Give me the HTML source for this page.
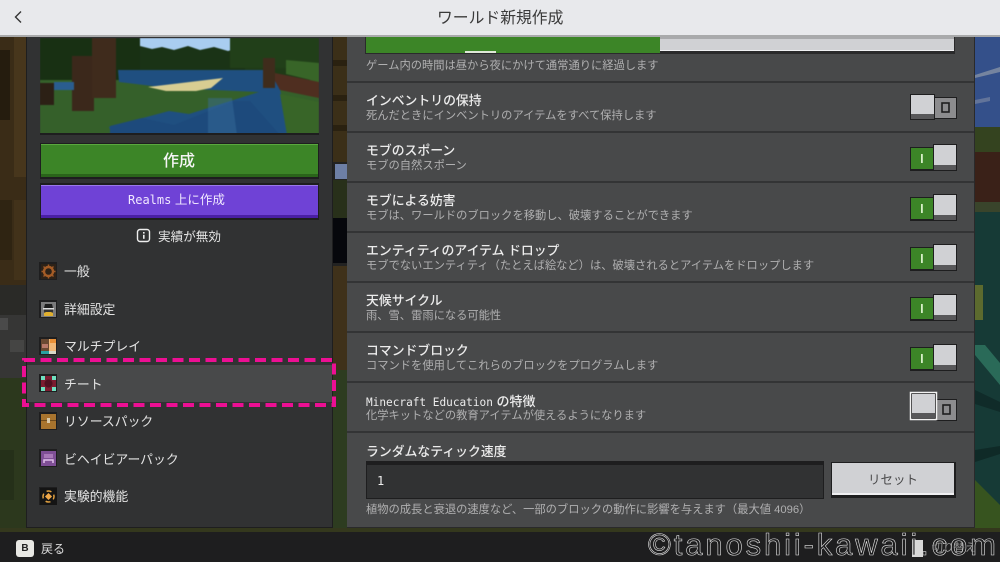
<!DOCTYPE html>
<html lang="ja"><head><meta charset="utf-8"><style>
*{box-sizing:border-box}
html,body{margin:0;padding:0}
body{width:1000px;height:562px;overflow:hidden;position:relative;background:#222;font-family:"Liberation Sans","Noto Sans CJK JP",sans-serif;color:#fff}
.a{position:absolute}
.t{position:absolute;white-space:nowrap;line-height:1}
.tt{left:366px;font-size:12.85px;color:#ececec;font-weight:500}
.sb{left:366px;font-size:11.27px;color:#b0b0b1}
.nav{left:64px;font-size:12.85px;color:#e2e2e2}
.ic{position:absolute;left:39px;width:18px;height:18px;background:#1e1e1f}
.ic svg{display:block;margin:.5px}
.m{font-family:"DejaVu Sans Mono",monospace}
</style></head><body>
<svg class="a" style="left:0;top:0" width="1000" height="562">
<rect x="0" y="37" width="26" height="250" fill="#3a2c17"/>
<rect x="14" y="37" width="12" height="140" fill="#47361c"/>
<rect x="0" y="50" width="10" height="70" fill="#251c0e"/>
<rect x="14" y="200" width="12" height="80" fill="#42321a"/>
<rect x="0" y="200" width="12" height="60" fill="#2f2412"/>
<rect x="0" y="310" width="26" height="70" fill="#363635"/>
<rect x="0" y="318" width="8" height="12" fill="#4a4a4a"/>
<rect x="10" y="340" width="14" height="12" fill="#454544"/>
<rect x="0" y="285" width="26" height="30" fill="#2a2a27"/>
<rect x="0" y="378" width="26" height="155" fill="#2c381d"/>
<rect x="0" y="450" width="14" height="50" fill="#253019"/>
<rect x="333" y="37" width="14" height="125" fill="#3b2f18"/>
<rect x="333" y="60" width="14" height="6" fill="#2a2110"/>
<rect x="333" y="95" width="14" height="6" fill="#2a2110"/>
<rect x="333" y="125" width="14" height="6" fill="#2a2110"/>
<rect x="335" y="164" width="13" height="15" fill="#6d7fa6"/>
<rect x="333" y="180" width="14" height="38" fill="#28301a"/>
<rect x="333" y="218" width="14" height="45" fill="#06070c"/>
<rect x="333" y="266" width="14" height="120" fill="#3f311a"/>
<rect x="333" y="370" width="14" height="165" fill="#2d3c20"/>
<rect x="975" y="37" width="25" height="90" fill="#34508a"/>
<path d="M975 75l25-8v5l-25 6z" fill="#75849f"/>
<path d="M975 100l15-3v4l-15 3z" fill="#62749a"/>
<rect x="975" y="127" width="25" height="25" fill="#34431f"/>
<rect x="975" y="152" width="25" height="50" fill="#3a2118"/>
<rect x="975" y="202" width="25" height="10" fill="#39442b"/>
<rect x="975" y="212" width="25" height="320" fill="#163a36"/>
<rect x="975" y="285" width="8" height="35" fill="#5c6a2e"/>
<path d="M975 345h10l15 18v22l-25-30z" fill="#2a6a58"/>
<path d="M975 390l25 12v10l-25-8z" fill="#102b29"/>
<path d="M975 450l25-4v8l-25 8z" fill="#0f2a27"/>
<path d="M975 480l25 25v27h-25z" fill="#37541f"/>
<rect x="0" y="528" width="1000" height="5" fill="#34381d"/>
</svg>

<!-- top bar -->
<div class="a" style="left:0;top:0;width:1000px;height:35px;background:#e8e9ec"></div>
<div class="a" style="left:0;top:35px;width:1000px;height:2px;background:#a9aaab"></div>
<svg class="a" style="left:12px;top:10px" width="12" height="14"><path d="M9 1.500L3.500 7l5.500 5.500" fill="none" stroke="#333" stroke-width="1.400"/></svg>
<div class="t" style="left:437px;top:10.500px;font-size:15.800px;color:#3a3a3a">ワールド新規作成</div>

<!-- left panel -->
<div class="a" style="left:26px;top:37px;width:307px;height:491px;background:#313233;border:1px solid #1e1e1f;border-top:0"></div>
<svg class="a" style="left:40px;top:38px" width="279" height="97" viewBox="0 0 279 97">
<g style="filter:blur(.5px)">
<rect width="279" height="97" fill="#1f3a17"/>
<rect x="100" width="105" height="13" fill="#a9cdf0"/>
<path d="M100 8l12 3 10-2 12 3 14-4 12 4 14-3 14 4 17-5v25H100z" fill="#1a3316"/>
<rect x="0" y="0" width="100" height="45" fill="#183013"/>
<rect x="190" y="0" width="89" height="30" fill="#213f19"/>
<path d="M0 42h279v55H0z" fill="#35602a"/>
<path d="M78 32h150l10 10 12 55H72l-3-8 60-16 20 3 70-22-90-4-50-6z" fill="#1f4f80"/>
<path d="M108 49l75-9-12 10-15 3-30 0z" fill="#d8cd92"/>
<path d="M70 97l0-9 32-8 32 7 60-24h16l30 34z" fill="#1d4a7c"/>
<path d="M168 60h24l5 37h-29z" fill="#3a6f9c" opacity=".45"/>
<path d="M230 34l49 10v16l-39-8z" fill="#4f2e20"/>
<path d="M240 56l39 8v33h-32z" fill="#386528"/>
<path d="M246 22l33 3v19l-33-8z" fill="#386528"/>
<rect x="223" y="20" width="12" height="30" fill="#3f2c1c"/>
<rect x="32" y="18" width="22" height="55" fill="#3b281b"/>
<rect x="52" y="0" width="24" height="60" fill="#3f2b1c"/>
<rect x="0" y="45" width="14" height="22" fill="#2c2015"/>
<rect x="14" y="44" width="20" height="8" fill="#2a5d8f"/>
</g>
<rect x="0" y="95" width="279" height="2" fill="#1e1e1f"/>
</svg>

<div class="a" style="left:40px;top:143px;width:279px;height:36px;background:#1e1e1f"></div>
<div class="a" style="left:41px;top:144px;width:277px;height:33px;background:#3c8527;border-top:1px solid #5aa83f;border-bottom:3px solid #2a641a"></div>
<div class="t" style="left:163px;top:153.500px;font-size:16px;color:#f4f4f4;font-weight:500">作成</div>
<div class="a" style="left:40px;top:183px;width:279px;height:37px;background:#1e1e1f"></div>
<div class="a" style="left:41px;top:185px;width:277px;height:33px;background:#6f42d6;border-top:1px solid #9a78ea;border-bottom:3px solid #4a1fa5"></div>
<div class="t" style="left:128px;top:194px;font-size:12.500px;color:#f0e8ff"><span class="m" style="font-size:12px">Realms</span> 上に作成</div>

<svg class="a" style="left:136px;top:228px" width="16" height="16"><rect x="1.500" y="1.500" width="12" height="12" rx="2.500" fill="none" stroke="#eee" stroke-width="1.400"/><rect x="7" y="4" width="1.600" height="1.600" fill="#eee"/><rect x="7" y="6.800" width="1.600" height="4" fill="#eee"/></svg>
<div class="t" style="left:158px;top:231px;font-size:12.600px;color:#e4e4e4">実績が無効</div>

<!-- nav items -->
<div class="ic" style="top:262px"><svg width="17" height="17"><rect x="1" y="1" width="15" height="15" fill="#2d2218"/><circle cx="8.500" cy="8.500" r="4.500" fill="none" stroke="#a55c26" stroke-width="2.400"/><path d="M8.500 1.500v2M8.500 13.500v2M1.500 8.500h2M13.500 8.500h2M3.500 3.500l1.500 1.500M12 12l1.500 1.500M13.500 3.500L12 5M5 12l-1.500 1.500" stroke="#a05a28" stroke-width="1.400"/></svg></div>
<div class="t nav" style="top:266px">一般</div>
<div class="ic" style="top:300px"><svg width="17" height="17"><rect x="1" y="1" width="15" height="15" fill="#7b7b7c"/><path d="M5 3h7l1 4H4z" fill="#1c1c1c"/><rect x="3" y="7" width="11" height="1.500" fill="#ddd"/><rect x="4" y="8.500" width="9" height="3" fill="#333"/><path d="M4 15v-3l2-1h5l2 1v3z" fill="#e0b030"/></svg></div>
<div class="t nav" style="top:304px">詳細設定</div>
<div class="ic" style="top:337px"><svg width="17" height="17"><rect x="1" y="1" width="8" height="15" fill="#6a4a32"/><rect x="9" y="1" width="7" height="15" fill="#f0b878"/><rect x="2" y="6" width="6" height="4" fill="#b87a6a"/><rect x="10" y="1" width="6" height="4" fill="#e89038"/><rect x="1" y="13" width="8" height="3" fill="#2aa0a0"/><rect x="9" y="13" width="7" height="3" fill="#d8d8c8"/></svg></div>
<div class="t nav" style="top:341px">マルチプレイ</div>
<div class="a" style="left:27px;top:365px;width:305px;height:37px;background:#48494a"></div>
<div class="ic" style="top:374px"><svg width="17" height="17"><rect x="1" y="1" width="15" height="15" fill="#7c1c30"/><circle cx="8.500" cy="8.500" r="4" fill="#4f1020"/><rect x="1" y="1" width="4" height="4" fill="#6fe0c0"/><rect x="12" y="1" width="4" height="4" fill="#6fe0c0"/><rect x="1" y="12" width="4" height="4" fill="#6fe0c0"/><rect x="12" y="12" width="4" height="4" fill="#6fe0c0"/></svg></div>
<div class="t nav" style="top:379px">チート</div>
<div class="ic" style="top:412px"><svg width="17" height="17"><rect x="1" y="1" width="15" height="15" fill="#a8742e"/><rect x="1" y="7" width="15" height="1" fill="#6e4a1c"/><rect x="7" y="5" width="3" height="5" fill="#d8c8a8"/></svg></div>
<div class="t nav" style="top:416px">リソースパック</div>
<div class="ic" style="top:449px"><svg width="17" height="17"><rect x="1" y="1" width="15" height="15" fill="#7f4f96"/><rect x="4" y="4" width="9" height="4" fill="#a878b8"/><path d="M4 13v-3h9v3" fill="none" stroke="#e0c0ea" stroke-width="1.500"/></svg></div>
<div class="t nav" style="top:454px">ビヘイビアーパック</div>
<div class="ic" style="top:487px"><svg width="17" height="17"><rect width="17" height="17" fill="#141414"/><circle cx="8.500" cy="8.500" r="5.500" fill="none" stroke="#e0a040" stroke-width="1.500" stroke-dasharray="5 3.600" stroke-dashoffset="2"/><rect x="6" y="6" width="5" height="5" fill="#f0a848" transform="rotate(45 8.500 8.500)"/></svg></div>
<div class="t nav" style="top:491px">実験的機能</div>

<!-- pink dashed highlight -->
<svg class="a" style="left:0;top:0" width="1000" height="562"><rect x="24" y="360" width="310" height="45" fill="none" stroke="#ec0f93" stroke-width="4" stroke-dasharray="11 5.500"/></svg>

<!-- right panel -->
<div class="a" style="left:347px;top:37px;width:628px;height:491px;background:#48494a;border-right:1px solid #2a2a2b;border-bottom:1px solid #2a2a2b"></div>
<div class="a" style="left:365px;top:37px;width:590px;height:17px;background:#2a2a2b"></div>
<div class="a" style="left:366px;top:37px;width:294px;height:16px;background:#3c8527"></div>
<div class="a" style="left:660px;top:37px;width:294px;height:14px;background:#d0d1d4;border-top:2px solid #a9aaac;border-bottom:1px solid #f0f0f2"></div>
<div class="a" style="left:465px;top:51px;width:31px;height:2px;background:#dfe8d8"></div>
<div class="t sb" style="top:61px">ゲーム内の時間は昼から夜にかけて通常通りに経過します</div>
<div class="a" style="left:347px;top:81px;width:627px;height:2px;background:#333435"></div>
<div class="a" style="left:347px;top:131px;width:627px;height:2px;background:#333435"></div>
<div class="a" style="left:347px;top:181px;width:627px;height:2px;background:#333435"></div>
<div class="a" style="left:347px;top:231px;width:627px;height:2px;background:#333435"></div>
<div class="a" style="left:347px;top:281px;width:627px;height:2px;background:#333435"></div>
<div class="a" style="left:347px;top:331px;width:627px;height:2px;background:#333435"></div>
<div class="a" style="left:347px;top:381px;width:627px;height:2px;background:#333435"></div>
<div class="a" style="left:347px;top:431px;width:627px;height:2px;background:#333435"></div>

<div class="t tt" style="top:95px">インベントリの保持</div><div class="t sb" style="top:111px">死んだときにインベントリのアイテムをすべて保持します</div>
<div class="t tt" style="top:145px">モブのスポーン</div><div class="t sb" style="top:161px">モブの自然スポーン</div>
<div class="t tt" style="top:195px">モブによる妨害</div><div class="t sb" style="top:211px">モブは、ワールドのブロックを移動し、破壊することができます</div>
<div class="t tt" style="top:245px">エンティティのアイテム ドロップ</div><div class="t sb" style="top:261px">モブでないエンティティ（たとえば絵など）は、破壊されるとアイテムをドロップします</div>
<div class="t tt" style="top:295px">天候サイクル</div><div class="t sb" style="top:311px">雨、雪、雷雨になる可能性</div>
<div class="t tt" style="top:345px">コマンドブロック</div><div class="t sb" style="top:361px">コマンドを使用してこれらのブロックをプログラムします</div>
<div class="t tt" style="top:395px;font-size:13px"><span class="m" style="font-size:11.100px">Minecraft Education</span> の特徴</div><div class="t sb" style="top:411px">化学キットなどの教育アイテムが使えるようになります</div>

<!-- toggles -->
<svg class="a" style="left:900px;top:85px" width="70" height="300">
<defs>
<g id="on"><rect x="10" y="2" width="47" height="24" fill="#1e1e1f"/><rect x="11" y="3" width="22" height="21" fill="#3c8527"/><rect x="21" y="9" width="1.800" height="9" fill="#d8f0c8"/><rect x="33" y="-1" width="24" height="27" fill="#1e1e1f"/><rect x="34" y="0" width="22" height="20" fill="#d0d1d4"/><rect x="34" y="20" width="22" height="5" fill="#58585a"/></g>
</defs>
<rect x="34" y="12" width="23" height="22" fill="#1e1e1f"/><rect x="35" y="13" width="21" height="20" fill="#8c8c8e"/><rect x="42" y="18" width="7" height="9" fill="none" stroke="#1e1e1f" stroke-width="1.600"/><rect x="10" y="9" width="25" height="26" fill="#1e1e1f"/><rect x="11" y="10" width="23" height="19" fill="#d0d1d4"/><rect x="11" y="29" width="23" height="5" fill="#58585a"/>
<use href="#on" y="60"/>
<use href="#on" y="110"/>
<use href="#on" y="160"/>
<use href="#on" y="210"/>
<use href="#on" y="260"/>
</svg>
<svg class="a" style="left:905px;top:388px" width="60" height="40">
<rect x="31" y="11" width="21" height="22" fill="#1e1e1f"/><rect x="32" y="12" width="19" height="20" fill="#8c8c8e"/><rect x="38" y="17" width="7" height="9" fill="none" stroke="#1e1e1f" stroke-width="1.600"/>
<rect x="5.500" y="4.500" width="26" height="27" fill="#1e1e1f" stroke="#f2f2f2" stroke-width="1.500"/><rect x="7" y="6" width="23" height="19" fill="#d0d1d4"/><rect x="7" y="25" width="23" height="5" fill="#58585a"/>
</svg>

<!-- tick speed -->
<div class="t tt" style="top:446px">ランダムなティック速度</div>
<div class="a" style="left:366px;top:461px;width:458px;height:38px;background:#313233;border:1px solid #1e1e1f;border-top:4px solid #1e1e1f"></div>
<div class="t m" style="left:377px;top:475px;font-size:12px;color:#eee">1</div>
<div class="a" style="left:831px;top:462px;width:125px;height:36px;background:#1e1e1f"></div>
<div class="a" style="left:832px;top:463px;width:122px;height:32px;background:#d0d1d4;border-bottom:2px solid #f0f0f2"></div>
<div class="t" style="left:868px;top:474px;font-size:12.500px;color:#4a4a4b">リセット</div>
<div class="t sb" style="top:505px">植物の成長と衰退の速度など、一部のブロックの動作に影響を与えます（最大値 4096）</div>

<!-- footer -->
<div class="a" style="left:0;top:532px;width:1000px;height:30px;background:#1e1e1f"></div>
<div class="a" style="left:16px;top:540px;width:18px;height:17px;background:#e8e8e4;border-radius:3px;color:#222;font-size:10px;font-weight:bold;text-align:center;line-height:17px">B</div>
<div class="t" style="left:41px;top:543px;font-size:12px;color:#ddd">戻る</div>
<div class="a" style="left:912px;top:540px;width:11px;height:17px;background:#d8d8d8"></div>
<div class="t" style="left:932px;top:543px;font-size:11px;color:#999">切り替え</div>
<svg class="a" style="left:640px;top:525px" width="360" height="37">
<text x="8" y="30" font-family="'Liberation Sans',sans-serif" font-size="31" textLength="348" lengthAdjust="spacing" fill="#1e1e1f" fill-opacity=".6" stroke="#e0e0e0" stroke-width=".6">©tanoshii-kawaii.com</text>
</svg>
</body></html>
